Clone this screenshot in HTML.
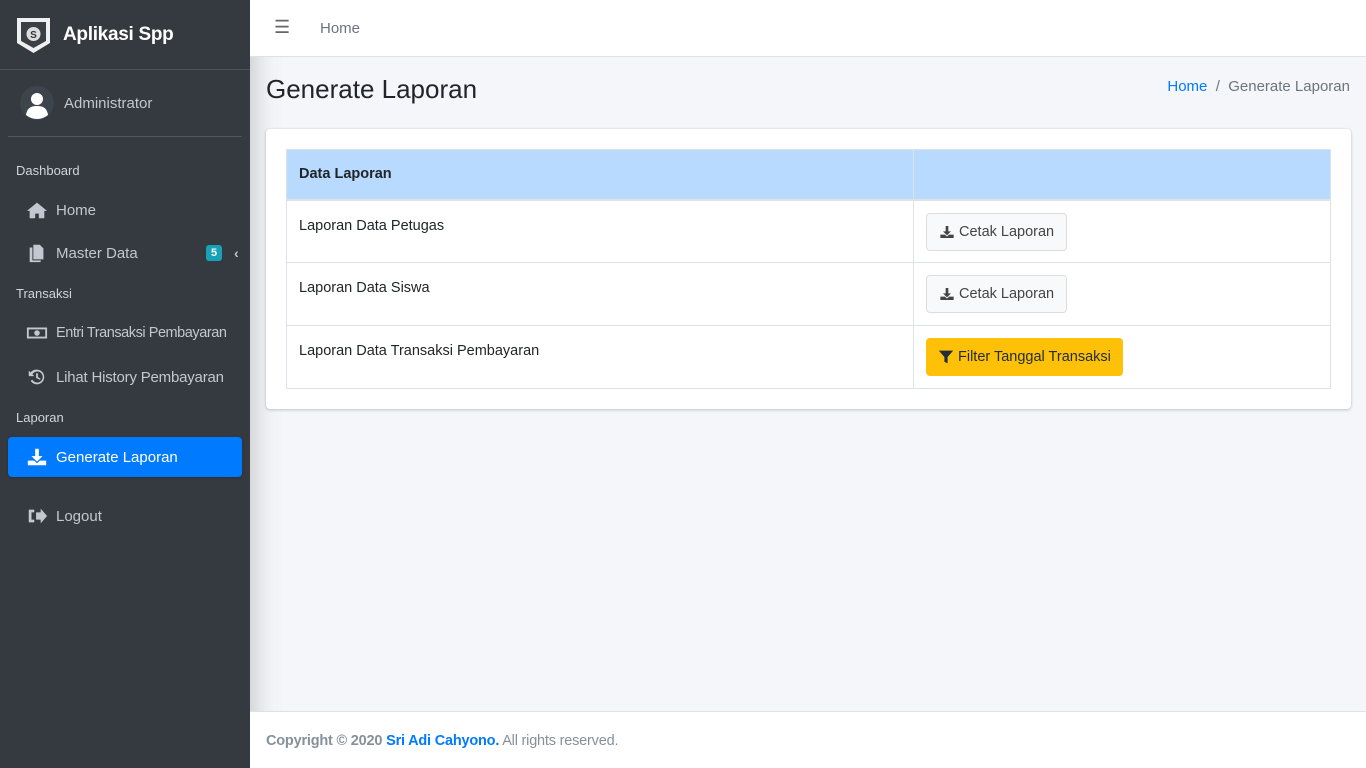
<!DOCTYPE html>
<html><head><meta charset="utf-8"><style>
*{box-sizing:border-box;margin:0;padding:0}
body{width:1366px;height:768px;overflow:hidden;font-family:"Liberation Sans",sans-serif;background:#f4f6f9;color:#212529;position:relative}
.sb{position:absolute;left:0;top:0;width:250px;height:768px;background:#343a40;box-shadow:0 14px 28px rgba(0,0,0,.25)}
.brand{height:70px;border-bottom:1px solid #4b545c;display:flex;align-items:center;padding-left:16px}
.brand b{color:#fff;font-size:19px;margin-left:12px;font-weight:bold;letter-spacing:-.3px}
.user{margin:0 8px;height:67px;border-bottom:1px solid #4f5962;display:flex;align-items:center;padding-left:12px}
.user span{color:#c2c7d0;font-size:15px;margin-left:10px}
.hd{color:#d0d4db;font-size:13px;padding-left:16px;position:absolute}
.it{position:absolute;left:8px;width:234px;height:40px;display:flex;align-items:center;padding-left:18px;color:#c2c7d0;font-size:15px;white-space:nowrap}
.it svg{width:22px;height:20px;margin-right:8px;fill:#c2c7d0;flex:none}
.it.act{background:#007bff;color:#fff;border-radius:4px;box-shadow:0 1px 3px rgba(0,0,0,.2)}
.it.act svg{fill:#fff}
.top{position:absolute;left:250px;top:0;right:0;height:57px;background:#fff;border-bottom:1px solid #dee2e6}
.foot{position:absolute;left:250px;top:711px;right:0;height:57px;background:#fff;border-top:1px solid #dee2e6;font-size:14.5px;color:#869099;padding:21px 16px;letter-spacing:-.2px}
.card{position:absolute;left:266px;top:129px;width:1085px;height:280px;background:#fff;border-radius:4px;box-shadow:0 0 1px rgba(0,0,0,.13),0 1px 3px rgba(0,0,0,.2)}
table{position:absolute;left:20px;top:20px;width:1045px;border-collapse:collapse;font-size:14.5px}
td,th{border:1px solid #dee2e6;text-align:left;padding:0 12px;vertical-align:top}
th{background:#b8daff;height:50px;vertical-align:middle;border-bottom:2px solid #dee2e6}
td{height:63px;padding-top:17px}
.btn{display:inline-flex;align-items:center;height:38px;padding:0 12px;border-radius:4px;font-size:14.5px;margin-top:-5px;margin-left:0}
.btn svg{width:16px;height:16px;margin-right:4px}
.g{background:#f8f9fa;border:1px solid #ddd;color:#444}
.y{background:#ffc107;color:#1f2d3d}
</style></head><body>
<div class="sb">
 <div class="brand"><svg width="35" height="40" viewBox="0 0 35 40"><path d="M1 3h33v25l-16.5 10L1 28z" fill="#f0f0f0"/><path d="M5 7h25v19l-12.5 7L5 26z" fill="#3b4047"/><circle cx="17.5" cy="19" r="7" fill="#ddd"/><text x="17.5" y="23" font-size="10" text-anchor="middle" font-weight="bold" fill="#333" font-family="Liberation Sans">S</text></svg><b>Aplikasi Spp</b></div>
 <div class="user"><svg width="34" height="34" viewBox="0 0 34 34"><circle cx="17" cy="17" r="17" fill="#3d444b"/><circle cx="17" cy="13" r="6" fill="#fff"/><path d="M6 29c1-7 5-9 11-9s10 2 11 9a17 17 0 0 1-22 0z" fill="#fff"/></svg><span>Administrator</span></div>
 <div class="hd" style="top:163px">Dashboard</div>
 <div class="it" style="top:190px"><svg viewBox="0 0 24 20"><path d="M12 2L1 11h3v8h6v-5h4v5h6v-8h3z"/></svg>Home</div>
 <div class="it" style="top:233px"><svg viewBox="0 0 24 20"><path d="M8 1h7l4 4v12H8z M4 4h3v14h9v2H4z"/></svg>Master Data<span style="position:absolute;left:198px;background:#17a2b8;color:#fff;font-size:11px;font-weight:bold;padding:2px 5px;border-radius:3px">5</span><span style="position:absolute;left:226px;font-weight:bold;font-size:14px">&#8249;</span></div>
 <div class="hd" style="top:286px">Transaksi</div>
 <div class="it" style="top:313px;letter-spacing:-.45px;font-size:14.5px"><svg viewBox="0 0 24 20"><path d="M1 4h22v12H1zM3 6v8h18V6z"/><circle cx="12" cy="10" r="3"/></svg>Entri Transaksi Pembayaran</div>
 <div class="it" style="top:357px;letter-spacing:-.2px"><svg viewBox="0 0 24 20"><path d="M12 2a8 8 0 1 1-7 12l2-1a6 6 0 1 0 0-6l2 2H3V3l2 2a8 8 0 0 1 7-3zm-1 4h2v4l3 2-1 1-4-2z"/></svg>Lihat History Pembayaran</div>
 <div class="hd" style="top:410px">Laporan</div>
 <div class="it act" style="top:437px"><svg viewBox="0 0 24 20"><path d="M10 1h4v8h4l-6 6-6-6h4zM2 14h7l3 3 3-3h7v5H2z"/></svg>Generate Laporan</div>
 <div class="it" style="top:496px"><svg viewBox="0 0 24 20"><path d="M3 3h6v3H6v8h3v3H3zM11 6h5V2l7 8-7 8v-4h-5z"/></svg>Logout</div>
</div>
<div class="top"><span style="position:absolute;left:24px;top:17px;color:#666;font-size:18px">&#9776;</span><span style="position:absolute;left:70px;top:20px;color:#6c757d;font-size:15px">Home</span></div>
<div style="position:absolute;left:266px;top:74px;font-size:26px;color:#212529">Generate Laporan</div>
<div style="position:absolute;right:16px;top:78px;font-size:15px;color:#6c757d"><span style="color:#007bff">Home</span> &nbsp;/&nbsp; Generate Laporan</div>
<div class="card"><table>
<tr><th style="width:627px">Data Laporan</th><th></th></tr>
<tr><td>Laporan Data Petugas</td><td><span class="btn g"><svg viewBox="0 0 24 20" fill="#444"><path d="M10 1h4v8h4l-6 6-6-6h4zM2 14h7l3 3 3-3h7v5H2z"/></svg>Cetak Laporan</span></td></tr>
<tr><td>Laporan Data Siswa</td><td><span class="btn g"><svg viewBox="0 0 24 20" fill="#444"><path d="M10 1h4v8h4l-6 6-6-6h4zM2 14h7l3 3 3-3h7v5H2z"/></svg>Cetak Laporan</span></td></tr>
<tr><td>Laporan Data Transaksi Pembayaran</td><td><span class="btn y"><svg viewBox="0 0 20 20" fill="#1f2d3d"><path d="M1 2h18l-7 8v8l-4-2v-6z"/></svg>Filter Tanggal Transaksi</span></td></tr>
</table></div>
<div class="foot"><b>Copyright © 2020 <span style="color:#007bff">Sri Adi Cahyono.</span></b> All rights reserved.</div>
</body></html>
